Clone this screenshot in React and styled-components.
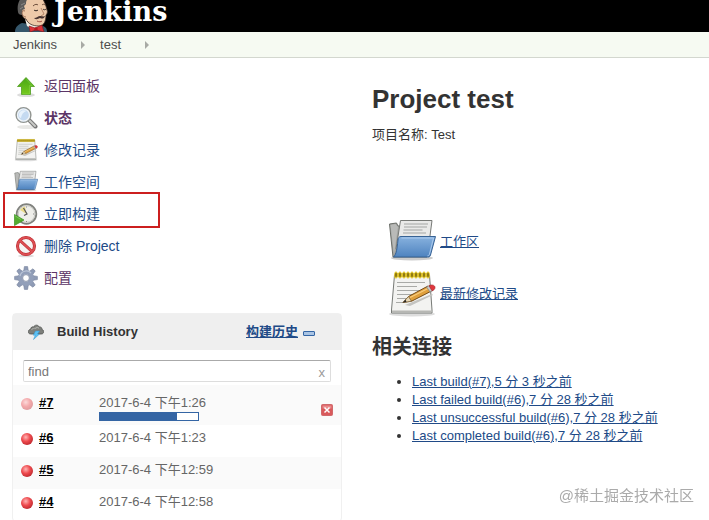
import React, { useState } from 'react';
import styled, { createGlobalStyle } from 'styled-components';

const GlobalStyle = createGlobalStyle`
  * {
    box-sizing: border-box;
  }

  body {
    margin: 0;
    background: #fff;
    color: #333;
    font: 13px/18px 'Liberation Sans', 'Noto Sans CJK SC', sans-serif;
  }

  a {
    color: #204a87;
  }

  svg {
    display: block;
    flex: none;
  }
`;

const Page = styled.div`
  height: 100vh;
  overflow: hidden;
`;

const Header = styled.header`
  height: 32px;
  padding-left: 15px;
  background: #000;
  display: flex;
`;

const Brand = styled.a`
  display: flex;
  gap: 6px;
  color: #fff;
  font: bold 27px/24px 'DejaVu Serif', 'Liberation Serif', serif;
  text-decoration: none;
`;

const Breadcrumbs = styled.nav`
  height: 26px;
  padding-left: 13px;
  background: #f6faf2;
  border-bottom: 1px solid #d3d7cf;
  display: flex;
  align-items: center;

  & a {
    color: #4d4d4d;
    text-decoration: none;
  }

  & span {
    width: 4px;
    margin: 0 15px 0 24px;
    border-left: 4px solid #a8aaa5;
    border-top: 4px solid transparent;
    border-bottom: 4px solid transparent;
  }
`;

const Layout = styled.div`
  display: flex;
  gap: 30px;
  padding: 12px 12px 0;
`;

const Sidebar = styled.aside`
  flex: 0 0 330px;
`;

const Tasks = styled.ul`
  list-style: none;
  margin: 0 0 19px;
  padding: 0;
`;

const Task = styled.li`
  position: relative;
  height: 32px;
  padding-left: 2px;
  display: flex;
  align-items: center;

  & a {
    display: flex;
    align-items: center;
    gap: 6px;
    font-size: 14px;
    font-weight: ${(props) => (props.$current ? 'bold' : 'normal')};
    color: ${(props) => (props.$visited ? '#5c3566' : '#204a87')};
    text-decoration: none;
  }
`;

const Marker = styled.span`
  position: absolute;
  left: -9px;
  top: -6px;
  width: 157px;
  height: 36px;
  border: 2px solid #cc1f1f;
  pointer-events: none;
`;

const Panel = styled.section`
  border: 1px solid #f0f0f0;
  border-radius: 4px;
`;

const PanelHead = styled.div`
  height: 36px;
  padding: 0 26px 0 15px;
  background: #efefef;
  display: flex;
  align-items: center;

  & h2 {
    flex: 1;
    margin: 0 0 0 13px;
    font-size: 13px;
    line-height: 18px;
  }

  & a {
    font-weight: bold;
  }
`;

const Collapse = styled.button`
  width: 12px;
  height: 5px;
  margin: 3px 0 0 5px;
  padding: 0;
  border: 1px solid #3465a4;
  border-radius: 1px;
  background: #a9c4e4;
`;

const Search = styled.div`
  height: 22px;
  margin: 10px 10px 3px;
  border: 1px solid #ddd;
  border-top-color: #aaa;
  border-radius: 2px;
  display: flex;
  align-items: center;

  & input {
    flex: 1;
    min-width: 0;
    padding: 2px 4px 0;
    border: 0;
    outline: 0;
    background: none;
    color: #333;
    font: inherit;
  }

  & input::placeholder {
    color: #777;
    opacity: 1;
  }

  & button {
    padding: 3px 5px 0;
    border: 0;
    background: none;
    color: #999;
    font: inherit;
    line-height: 16px;
  }
`;

const Builds = styled.table`
  width: 100%;
  border-collapse: collapse;

  & tr:nth-child(odd) {
    background: #fafafa;
  }

  & td {
    height: 32px;
    padding: 4px 0 0;
    vertical-align: top;
    color: #666;
  }

  & td:first-child {
    width: 86px;
  }

  & tr:first-child td {
    height: 40px;
    padding-top: 9px;
  }
`;

const BuildName = styled.div`
  padding-left: 8px;
  display: flex;
  align-items: center;
  gap: 6px;

  & a {
    color: #000;
    font-weight: bold;
  }
`;

const Progress = styled.div`
  width: 100px;
  height: 9px;
  margin-bottom: 4px;
  border: 1px solid #3465a4;
  background: #fff;

  & div {
    height: 100%;
    background: #3465a4;
  }
`;

const Stop = styled.button`
  display: block;
  margin: 10px 8px 0 auto;
  padding: 0;
  border: 0;
  background: none;
`;

const Main = styled.main`
  flex: 1;
  min-width: 0;

  & h1 {
    margin: 14px 0 12px;
    font-size: 26px;
    line-height: 30px;
  }

  & p {
    margin: 0;
  }

  & h2 {
    margin: 13px 0 12px;
    font-size: 20px;
    line-height: 28px;
  }
`;

const Shortcuts = styled.div`
  margin: 72px 0 0 16px;
`;

const Shortcut = styled.a`
  height: 52px;
  width: fit-content;
  display: flex;
  align-items: center;
  gap: 4px;
`;

const Permalinks = styled.ul`
  margin: 0;
  padding-left: 40px;
  white-space: nowrap;
`;

const Watermark = styled.div`
  position: fixed;
  right: 15px;
  bottom: 13px;
  color: #aaa;
  font-size: 15px;
  line-height: 22px;
`;

const tasks = [
  { label: '返回面板', icon: UpIcon, visited: true },
  { label: '状态', icon: SearchIcon, visited: true, current: true },
  { label: '修改记录', icon: NotepadIcon },
  { label: '工作空间', icon: FolderIcon },
  { label: '立即构建', icon: ClockIcon, marked: true },
  { label: '删除 Project', icon: DeleteIcon },
  { label: '配置', icon: GearIcon, visited: true },
];

const builds = [
  { id: 7, date: '2017-6-4 下午1:26', progress: 79 },
  { id: 6, date: '2017-6-4 下午1:23' },
  { id: 5, date: '2017-6-4 下午12:59' },
  { id: 4, date: '2017-6-4 下午12:58' },
];

const permalinks = [
  'Last build(#7),5 分 3 秒之前',
  'Last failed build(#6),7 分 28 秒之前',
  'Last unsuccessful build(#6),7 分 28 秒之前',
  'Last completed build(#6),7 分 28 秒之前',
];

export default function App() {
  return (
    <Page>
      <GlobalStyle />
      <Header>
        <Brand href="#">
          <ButlerLogo />
          Jenkins
        </Brand>
      </Header>
      <Breadcrumbs>
        <a href="#">Jenkins</a>
        <span />
        <a href="#">test</a>
        <span />
      </Breadcrumbs>
      <Layout>
        <Sidebar>
          <Tasks>
            {tasks.map(({ label, icon: Icon, visited, current, marked }) => (
              <Task key={label} $visited={visited} $current={current}>
                <a href="#">
                  <Icon size={24} />
                  {label}
                </a>
                {marked && <Marker />}
              </Task>
            ))}
          </Tasks>
          <BuildHistory />
        </Sidebar>
        <Main>
          <h1>Project test</h1>
          <p>项目名称: Test</p>
          <Shortcuts>
            <Shortcut href="#">
              <FolderIcon size={48} />
              工作区
            </Shortcut>
            <Shortcut href="#">
              <NotepadIcon size={48} />
              最新修改记录
            </Shortcut>
          </Shortcuts>
          <h2>相关连接</h2>
          <Permalinks>
            {permalinks.map((text) => (
              <li key={text}>
                <a href="#">{text}</a>
              </li>
            ))}
          </Permalinks>
        </Main>
      </Layout>
      <Watermark>@稀土掘金技术社区</Watermark>
    </Page>
  );
}

function BuildHistory() {
  const [query, setQuery] = useState('');
  return (
    <Panel>
      <PanelHead>
        <StormIcon />
        <h2>Build History</h2>
        <a href="#">构建历史</a>
        <Collapse aria-label="collapse" />
      </PanelHead>
      <Search>
        <input
          aria-label="find"
          placeholder="find"
          value={query}
          onChange={(e) => setQuery(e.target.value)}
        />
        <button onClick={() => setQuery('')}>x</button>
      </Search>
      <Builds>
        <tbody>
          {builds.map(({ id, date, progress }) => (
            <tr key={id}>
              <td>
                <BuildName>
                  <Ball pale={progress !== undefined} />
                  <a href="#">#{id}</a>
                </BuildName>
              </td>
              <td>
                {date}
                {progress && (
                  <Progress>
                    <div style={{ width: `${progress}%` }} />
                  </Progress>
                )}
              </td>
              <td>
                {progress && (
                  <Stop aria-label="stop">
                    <StopIcon />
                  </Stop>
                )}
              </td>
            </tr>
          ))}
        </tbody>
      </Builds>
    </Panel>
  );
}

function ButlerLogo() {
  return (
    <svg width="33" height="32" viewBox="0 0 33 32">
      <path d="M0 32c0-4 2-7 7-9l7 1 8 3 6-1c3 1 4 3 4 6z" fill="#35576b" />
      <path d="M10 19l2 7 6 4 9-3v-4z" fill="#f4efe6" />
      <path d="M7-2h20c3 4 4 8 5 12 1 2 0 4-1 5 0 6-2 11-7 11-6 0-11-2-13-7-2 0-4-3-4-6z" fill="#edc9a9" stroke="#3c2d27" strokeWidth=".8" />
      <path d="M3 12C2 7 3 2 6-2h8c-3 2-3 4-3 6l-2 2 1 3-3 1v5c-2 0-4-1-4-3z" fill="#5d5c5b" />
      <path d="M5 9l3-2M6 5l4-2" stroke="#8b8987" />
      <path d="M10 11c-4-2-4 6 1 6" fill="#edc9a9" stroke="#8a5d47" strokeWidth=".8" />
      <path d="M18 6c2-2 4-2 5-1M27 5c1-1 2-1 3 0" fill="none" stroke="#6a4b39" />
      <path d="M19 10c1 1 3 1 4 0M28 9c1 1 2 1 3 0" fill="none" stroke="#2e2320" />
      <path d="M26 8l3 6-3 2" fill="none" stroke="#a77557" strokeWidth=".8" />
      <path d="M19 18c3 0 4-2 6-2 2 0 3 1 5 0-1 3-3 3-5 2-2 1-4 2-6 0z" fill="#493532" />
      <path d="M22 21c2 1 4 1 5 0" fill="none" stroke="#a34f42" />
      <path d="M14 26l6 2 7-3 2 7-8-2-6 2z" fill="#dc3037" stroke="#741a1f" strokeWidth=".6" />
      <circle cx="21" cy="29" r="1.8" fill="#b4151f" />
    </svg>
  );
}

function UpIcon({ size }) {
  return (
    <svg width={size} height={size} viewBox="0 0 24 24">
      <defs>
        <linearGradient id="up" x1="0" x2="0" y1="0" y2="1">
          <stop stopColor="#48a614" />
          <stop offset="1" stopColor="#76c91e" />
        </linearGradient>
      </defs>
      <ellipse cx="12" cy="21" rx="9" ry="2" fill="#ddd" />
      <path d="M12 3.5l8.5 9h-4V20.5h-9v-8h-4z" fill="url(#up)" stroke="#519d22" strokeWidth=".8" />
      <path d="M12 5.2l6 6.3h-2.600V20H8.500" fill="none" stroke="#8bd84a" strokeWidth=".5" />
    </svg>
  );
}

function SearchIcon({ size }) {
  return (
    <svg width={size} height={size} viewBox="0 0 24 24">
      <ellipse cx="13" cy="21" rx="10" ry="2" fill="#e8e8e6" />
      <path d="M15 14l6.500 6.500" stroke="#777" strokeWidth="4" strokeLinecap="round" />
      <path d="M15.500 14.500l5.500 5.500" stroke="#c9cac7" strokeWidth="2" strokeLinecap="round" />
      <circle cx="9.500" cy="9" r="7.400" fill="#c5daf1" stroke="#929590" strokeWidth="1.400" />
      <circle cx="9.500" cy="9" r="6" fill="none" stroke="#f2f5f7" strokeWidth="1.200" />
      <path d="M5 9c0-4 4-6 8-4-2 0-5 2-6 7-1 0-2-1-2-3z" fill="#e8f2fc" />
    </svg>
  );
}

function NotepadIcon({ size }) {
  return (
    <svg width={size} height={size} viewBox="0 0 48 48">
      <ellipse cx="24" cy="44" rx="23" ry="2.500" fill="#ddd" />
      <path d="M6.500 5h35L44 40v3H3.500v-3z" fill="#f3f3f1" stroke="#777a76" strokeLinejoin="round" />
      <path d="M4 40.500h39.500v2H4z" fill="#b7b8b4" />
      <path d="M9 12.500h28M9 16.500h20M9 20.500h28M9 24.500h24M9 28.500h11M8 32.500h8" stroke="#a9aaa7" />
      <path d="M7.500 5h33" stroke="#cdb43a" strokeWidth="4" />
      {[8, 12, 16, 20, 24, 28, 32, 36, 40].map((x) => (
        <ellipse key={x} cx={x} cy="5" rx="1.300" ry="3" fill="#6c5807" stroke="#e5c92a" strokeWidth="1.100" />
      ))}
      <path d="M17 35l27-11 1 1-23 11z" fill="#c4c4c1" />
      <path d="M15 32.500l5.500-6L40 16l3.500 5L24 31z" fill="#e0a03d" stroke="#754c19" strokeLinejoin="round" />
      <path d="M22 27.500l19-9.500" stroke="#f7cc7d" strokeWidth="1.300" />
      <path d="M15 32.500l5.500-6 3 4.800z" fill="#ead9b5" stroke="#75603e" strokeWidth=".7" />
      <path d="M15 32.500l2.500-2.800 1 2z" fill="#222" />
      <path d="M38.500 17l3-1.500 3.500 5-3 1.500z" fill="#c7c8c5" stroke="#777" strokeWidth=".6" />
      <path d="M41 15.700c3-1.500 6-.5 6 1.800 0 1.700-1 2.400-3 3.300z" fill="#e0373d" stroke="#a51d22" strokeWidth=".6" />
    </svg>
  );
}

function FolderIcon({ size }) {
  return (
    <svg width={size} height={size} viewBox="0 0 48 48">
      <defs>
        <linearGradient id="folder" x1="0" x2="0" y1="0" y2="1">
          <stop stopColor="#88b2df" />
          <stop offset="1" stopColor="#4e83bf" />
        </linearGradient>
      </defs>
      <ellipse cx="24" cy="40" rx="21" ry="2.500" fill="#ccc" />
      <path d="M1.500 6l7-1 1.500 3h32l-3 31H5z" fill="#a2a4a0" stroke="#6b6e69" strokeLinejoin="round" />
      <path d="M2.500 7l5-1L10 9 6 36z" fill="#b9bab8" />
      <path d="M12.500 2.500h31.500L40 33l-32-2z" fill="#e9e9e8" stroke="#777976" />
      <path d="M16 6h24M16 9h23M15.500 12h19M15 15h23" stroke="#a4a5a3" strokeWidth="1.200" />
      <path d="M13 18.500h34.500L42.500 37c-.5 1.500-1 2-2.500 2H5.500c3-3 3.500-8 4.500-17 .3-2 .8-3.500 3-3.500z" fill="url(#folder)" stroke="#376294" strokeLinejoin="round" />
      <path d="M13.500 20h32L41.500 36c-.3 1.200-.8 1.800-2 1.800" fill="none" stroke="#b2cff0" strokeWidth=".9" />
    </svg>
  );
}

function ClockIcon({ size }) {
  return (
    <svg width={size} height={size} viewBox="0 0 24 24">
      <circle cx="12.500" cy="12" r="9.800" fill="#eeeeea" stroke="#80827e" strokeWidth="1.800" />
      <circle cx="12.500" cy="12" r="8.300" fill="none" stroke="#c8c9c5" />
      <path d="M12.500 12L11 4.500A8 8 0 0 0 6 8z" fill="#eadb86" />
      <path d="M9.500 6l3.500 6-3 1.500" fill="none" stroke="#555" strokeWidth="1.200" />
      <path d="M12.500 4.500v1M20 12h-1M12.500 19v1" stroke="#888" />
      <path d="M.5 12.500l9.500 5.500-9.500 5.500z" fill="#55ad30" stroke="#3b9323" strokeWidth=".7" />
      <path d="M1.300 14l5.500 3.400" stroke="#87ce6b" strokeWidth=".8" />
    </svg>
  );
}

function DeleteIcon({ size }) {
  return (
    <svg width={size} height={size} viewBox="0 0 24 24">
      <ellipse cx="12" cy="22" rx="8" ry="1.300" fill="#ddd" />
      <circle cx="12" cy="12" r="8.500" fill="#f5f4f3" stroke="#b9252a" strokeWidth="3" />
      <path d="M6 6.500l12 11" stroke="#b9252a" strokeWidth="3" />
      <circle cx="12" cy="12" r="8.500" fill="none" stroke="#dc5054" strokeWidth="1.800" />
      <path d="M6 6.500l12 11" stroke="#dc5054" strokeWidth="1.800" />
    </svg>
  );
}

function GearIcon({ size }) {
  return (
    <svg width={size} height={size} viewBox="0 0 24 24">
      <g fill="#8e9bb5" stroke="#75819b" strokeWidth=".6">
        {[0, 45, 90, 135, 180, 225, 270, 315].map((angle) => (
          <path key={angle} d="M9.700 5l.7-4.400h3.200l.7 4.400z" transform={`rotate(${angle} 12 12)`} />
        ))}
      </g>
      <circle cx="12" cy="12" r="5.700" fill="none" stroke="#929fb9" strokeWidth="4.600" />
      <circle cx="12" cy="12" r="3.400" fill="#fff" stroke="#75819b" strokeWidth=".8" />
      <path d="M6 10a6.500 6.500 0 0 1 11-3" fill="none" stroke="#bac4d7" strokeWidth="1.200" />
    </svg>
  );
}

function StormIcon() {
  return (
    <svg width="16" height="16" viewBox="0 0 16 16">
      <path d="M3 10C.8 10 .3 8.800.4 7.500.5 6 1.700 5.300 2.700 5.300 2.700 3 4.500 2.500 5.700 3 6.500.8 9.800.3 11.300 3c2-.3 2.800 1.200 2.600 2.400C15.500 6 16 7 15.500 8.400 15.200 9.800 14 10 13 10z" fill="#7d7f7b" stroke="#4f524f" strokeWidth=".8" />
      <path d="M3.500 6c1-2 2.500-2 4-1.500C8.500 3 10 3 11 4.500" fill="none" stroke="#a5a7a3" strokeWidth="1.200" />
      <path d="M7.500 7h4L9.500 10h2L5.500 15.500l1.800-4.300h-2z" fill="#5cc1f4" stroke="#3097d0" strokeWidth=".5" />
    </svg>
  );
}

function Ball({ pale }) {
  return (
    <svg width="12" height="14" viewBox="0 0 12 14" opacity={pale ? 0.45 : 1}>
      <defs>
        <radialGradient id="ball" cx=".4" cy=".35" r=".65">
          <stop stopColor="#ffb5b5" />
          <stop offset=".55" stopColor="#ee4a4e" />
          <stop offset="1" stopColor="#c22c32" />
        </radialGradient>
      </defs>
      <circle cx="6" cy="8" r="6" fill="url(#ball)" />
    </svg>
  );
}

function StopIcon() {
  return (
    <svg width="12" height="12" viewBox="0 0 12 12">
      <rect x=".5" y=".5" width="11" height="11" rx="1" fill="#d9595b" stroke="#d0686b" />
      <path d="M1.500 1.500h9v3h-9z" fill="#e98b8c" />
      <path d="M3.500 3.500l5 5M8.500 3.500l-5 5" stroke="#fff" strokeWidth="1.500" />
    </svg>
  );
}
